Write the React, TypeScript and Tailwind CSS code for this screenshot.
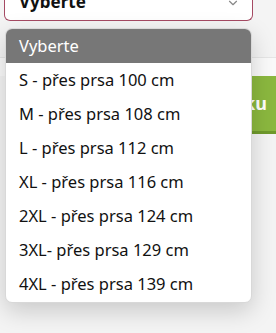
import { ChevronDown } from "lucide-react";

const options = [
  "S - přes prsa 100 cm",
  "M - přes prsa 108 cm",
  "L - přes prsa 112 cm",
  "XL - přes prsa 116 cm",
  "2XL - přes prsa 124 cm",
  "3XL- přes prsa 129 cm",
  "4XL - přes prsa 139 cm",
];

export default function App() {
  return (
    <div
      className="relative w-[276px] h-[333px] overflow-hidden bg-[#f4f4f4]"
      style={{ fontFamily: "'Noto Sans', Lato, sans-serif" }}
    >
      {/* page underneath */}
      <div className="flex flex-col">
        <div className="flex items-end h-[22px] -mt-[1px] mx-[4px] w-[249px] rounded-b-[6px] border border-t-0 border-[#a54a63] bg-white">
          <span className="ml-[14px] -mb-[1px] text-[17px] font-bold leading-[22px] text-[#111] -translate-y-[8px]">
            Vyberte
          </span>
          <ChevronDown size={14} className="ml-auto mr-[12px] mb-[10px] text-[#888]" />
        </div>
        <div className="h-[36px] bg-[#f4f4f4]" />
        <div className="h-[19px] bg-[#fafafa] border-t border-[#e6e6e6]" />
        <div className="flex justify-end">
          <div className="w-[40px] h-[58px] bg-[#8bb83f] border-b-[3px] border-[#6f9a2c] flex items-center pl-[8px] text-white font-bold text-[18px]">
            ku
          </div>
        </div>
      </div>

      {/* open dropdown */}
      <div className="absolute left-[5px] top-[28px] w-[247px] rounded-[7px] bg-white overflow-hidden shadow-[0_8px_24px_rgba(0,0,0,0.18)] border border-[#d8d8d8]">
        <div className="h-[34px] bg-[#777777] flex items-center pl-[13px] text-white text-[16.5px]">
          Vyberte
        </div>
        <div className="flex flex-col pb-[1px]">
          {options.map((o) => (
            <div key={o} className="h-[34px] flex items-center pl-[13px] text-[16.5px] text-[#111]">
              {o}
            </div>
          ))}
        </div>
      </div>
    </div>
  );
}
